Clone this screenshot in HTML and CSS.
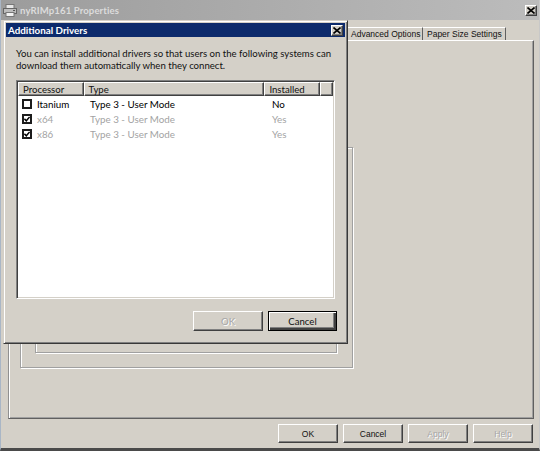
FILE: index.html
```html
<!DOCTYPE html>
<html>
<head>
<meta charset="utf-8">
<link rel="stylesheet" href="styles.css">
</head>
<body>
<div class="window">
  <div class="titlebar">
    <svg class="app-icon" width="14" height="13" viewBox="0 0 14 13">
      <rect x="3" y="0.5" width="8" height="4" fill="#e8e8e8" stroke="#777"/>
      <rect x="0.5" y="4.5" width="13" height="5" fill="#bdbdbd" stroke="#666"/>
      <rect x="3" y="8.5" width="8" height="4" fill="#f2f2f2" stroke="#777"/>
      <rect x="10" y="6" width="2" height="1" fill="#555"/>
    </svg>
    <span class="title">nyRIMp161 Properties</span>
    <span class="close-btn">
      <svg width="8" height="7" viewBox="0 0 8 7"><path d="M0.5 0.5 L7.5 6.5 M7.5 0.5 L0.5 6.5" stroke="#000" stroke-width="1.6"/></svg>
    </span>
  </div>
  <div class="tabstrip">
    <div class="tab tab-adv">Advanced Options</div>
    <div class="tab tab-paper">Paper Size Settings</div>
  </div>
  <div class="tabpage">
    <div class="group group-outer">
      <div class="group group-inner"></div>
    </div>
  </div>
  <div class="buttonbar">
    <div class="btn">OK</div>
    <div class="btn">Cancel</div>
    <div class="btn disabled">Apply</div>
    <div class="btn disabled">Help</div>
  </div>
</div>

<div class="dialog">
  <div class="dlg-title">
    <span class="dlg-title-text">Additional Drivers</span>
    <span class="close-btn">
      <svg width="8" height="7" viewBox="0 0 8 7"><path d="M0.5 0.5 L7.5 6.5 M7.5 0.5 L0.5 6.5" stroke="#000" stroke-width="1.6"/></svg>
    </span>
  </div>
  <div class="dlg-body">
    <div class="intro">
      <div class="intro-line">You can install additional drivers so that users on the following systems can</div>
      <div class="intro-line">download them automatically when they connect.</div>
    </div>
    <div class="listview">
      <div class="lv-header">
        <div class="hcell c-proc">Processor</div>
        <div class="hcell c-type">Type</div>
        <div class="hcell c-inst">Installed</div>
        <div class="hcell c-rest"></div>
      </div>
      <div class="lv-row">
        <div class="cell c-proc"><span class="chk"></span>Itanium</div>
        <div class="cell c-type">Type 3 - User Mode</div>
        <div class="cell c-inst">No</div>
      </div>
      <div class="lv-row dim">
        <div class="cell c-proc"><span class="chk checked"><svg width="6" height="6" viewBox="0 0 6 6"><path d="M0.4 2.8 L2.3 4.8 L5.6 0.9" fill="none" stroke="#000" stroke-width="1.5"/></svg></span>x64</div>
        <div class="cell c-type">Type 3 - User Mode</div>
        <div class="cell c-inst">Yes</div>
      </div>
      <div class="lv-row dim">
        <div class="cell c-proc"><span class="chk checked"><svg width="6" height="6" viewBox="0 0 6 6"><path d="M0.4 2.8 L2.3 4.8 L5.6 0.9" fill="none" stroke="#000" stroke-width="1.5"/></svg></span>x86</div>
        <div class="cell c-type">Type 3 - User Mode</div>
        <div class="cell c-inst">Yes</div>
      </div>
    </div>
    <div class="dlg-buttons">
      <div class="dbtn disabled">OK</div>
      <div class="dbtn default">Cancel</div>
    </div>
  </div>
</div>
</body>
</html>
```

FILE: styles.css
```css
* { box-sizing: border-box; }
html, body { margin: 0; padding: 0; }
body {
  width: 540px;
  height: 451px;
  overflow: hidden;
  background: #d4d0c8;
  position: relative;
  font-family: "Liberation Sans", Arial, sans-serif;
}

.window {
  width: 540px;
  height: 451px;
  background: #d4d0c8;
  border-left: 1px solid #a9b6c6;
  border-right: 1px solid #c8c8c8;
  border-bottom: 3px solid #4a4a4a;
  display: flex;
  flex-direction: column;
}

.titlebar {
  height: 20px;
  flex: none;
  background: linear-gradient(to right, #9c9c9c, #bcbcbc);
  display: flex;
  align-items: center;
  padding-left: 2px;
  padding-right: 2px;
}
.app-icon { flex: none; margin-right: 3px; }
.title {
  flex: 1;
  color: #dcdcdc;
  font-family: Lato, "Noto Sans", sans-serif;
  font-weight: bold;
  font-size: 9.6px;
  letter-spacing: 0.1px;
}

.close-btn {
  width: 12px;
  height: 11px;
  flex: none;
  background: #d4d0c8;
  border-top: 1px solid #fff;
  border-left: 1px solid #fff;
  border-right: 1px solid #404040;
  border-bottom: 1px solid #404040;
  box-shadow: inset -1px -1px 0 #808080;
  display: flex;
  align-items: center;
  justify-content: center;
}
.titlebar .close-btn { margin-top: 1px; }

.tabstrip {
  height: 20px;
  flex: none;
  display: flex;
  align-items: flex-end;
  padding-left: 346px;
}
.tab {
  height: 13px;
  font-size: 8.5px;
  color: #111;
  line-height: 12px;
  padding-left: 3px;
  border-top: 1px solid #fff;
  border-left: 1px solid #fff;
  border-right: 1px solid #606060;
  white-space: nowrap;
  overflow: hidden;
}
.tab-adv { width: 76px; }
.tab-paper { width: 83px; border-left: none; padding-left: 4px; }

.tabpage {
  flex: none;
  margin-left: 7px;
  width: 526px;
  height: 379px;
  border-top: 1px solid #fff;
  border-left: 1px solid #909090;
  border-right: 1px solid #606060;
  border-bottom: 1px solid #606060;
  box-shadow: inset 1px 0 0 #fff, inset -1px -1px 0 #a0a0a0;
  padding-top: 106px;
  padding-left: 11px;
}

.group {
  border: 1px solid #a0a0a0;
  box-shadow: 1px 1px 0 #fff, inset 1px 1px 0 #fff;
}
.group-outer {
  width: 333px;
  height: 221px;
  padding: 30px 15px 0 14px;
}
.group-inner {
  width: 302px;
  height: 175px;
}

.buttonbar {
  flex: none;
  display: flex;
  justify-content: flex-end;
  gap: 5px;
  padding-right: 6px;
  margin-top: 5px;
}
.btn {
  width: 60px;
  height: 19px;
  font-size: 8.5px;
  color: #111;
  display: flex;
  align-items: center;
  justify-content: center;
  border-top: 1px solid #fff;
  border-left: 1px solid #fff;
  border-right: 1px solid #404040;
  border-bottom: 1px solid #404040;
  box-shadow: inset -1px -1px 0 #808080;
}
.btn.disabled { color: #a6a6a6; text-shadow: 1px 1px 0 #fff; }

/* Dialog overlay */
.dialog {
  position: absolute;
  left: 3px;
  top: 20px;
  width: 345px;
  height: 324px;
  background: #d4d0c8;
  border-top: 1px solid #d4d0c8;
  border-left: 1px solid #d4d0c8;
  border-right: 1px solid #383838;
  border-bottom: 1px solid #383838;
  box-shadow: inset 1px 1px 0 #fff, inset -1px -1px 0 #808080;
  padding: 2px;
  font-family: Lato, "Noto Sans", sans-serif;
}
.dlg-title {
  height: 14px;
  background: #0c2a6c;
  display: flex;
  align-items: center;
  padding-left: 2px;
  padding-right: 2px;
}
.dlg-title-text {
  flex: 1;
  color: #fff;
  font-weight: bold;
  font-size: 9.8px;
}
.dlg-body {
  padding: 11px 8px 0 10px;
}
.intro {
  font-size: 9.6px;
  color: #111;
  white-space: nowrap;
}
.intro-line { height: 12px; line-height: 12px; }
.listview {
  margin-top: 8px;
  width: 319px;
  height: 219px;
  background: #fff;
  border-top: 1px solid #808080;
  border-left: 1px solid #808080;
  border-right: 1px solid #fff;
  border-bottom: 1px solid #fff;
  box-shadow: inset 1px 1px 0 #404040, inset -1px -1px 0 #d4d0c8;
  padding: 1px;
}
.lv-header {
  display: flex;
  height: 14px;
}
.hcell {
  height: 14px;
  font-size: 9.6px;
  line-height: 13px;
  padding-left: 4px;
  background: #d4d0c8;
  color: #111;
  border-top: 1px solid #fff;
  border-left: 1px solid #fff;
  border-right: 1px solid #404040;
  border-bottom: 1px solid #404040;
  box-shadow: inset -1px -1px 0 #808080;
  white-space: nowrap;
}
.c-proc { width: 66px; }
.c-type { width: 182px; }
.c-inst { width: 56px; }
.c-rest { width: 13px; }
.lv-row {
  display: flex;
  height: 15px;
  align-items: center;
}
.cell {
  font-size: 9.8px;
  color: #000;
  white-space: nowrap;
  display: flex;
  align-items: center;
}
.lv-row .c-proc { padding-left: 4px; }
.lv-row .c-type { padding-left: 6px; }
.lv-row .c-inst { padding-left: 6px; }
.lv-row.dim .cell { color: #a3a3a3; }
.chk {
  width: 10px;
  height: 10px;
  border: 2px solid #1c1c1c;
  background: #fff;
  margin-right: 5px;
  display: flex;
  align-items: center;
  justify-content: center;
  flex: none;
}

.dlg-buttons {
  margin-top: 12px;
  display: flex;
  justify-content: flex-end;
  gap: 5px;
}
.dbtn {
  width: 70px;
  height: 20px;
  font-size: 9.6px;
  display: flex;
  align-items: center;
  justify-content: center;
  color: #111;
  border-top: 1px solid #fff;
  border-left: 1px solid #fff;
  border-right: 1px solid #404040;
  border-bottom: 1px solid #404040;
  box-shadow: inset -1px -1px 0 #808080;
}
.dbtn.disabled { color: #a6a6a6; text-shadow: 1px 1px 0 #fff; }
.dbtn.default {
  width: 69px;
  border: 1px solid #000;
  box-shadow: inset 1px 1px 0 #fff, inset -2px -2px 0 #404040, inset -3px -3px 0 #808080;
}
```
